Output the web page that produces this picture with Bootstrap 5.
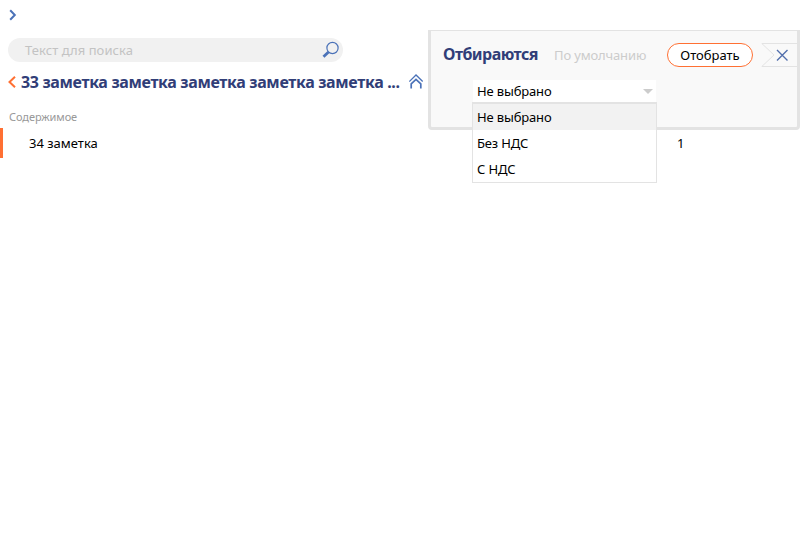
<!DOCTYPE html>
<html lang="ru">
<head>
<meta charset="utf-8">
<meta name="viewport" content="width=device-width, initial-scale=1">
<title>Заметки</title>
<link href="https://cdn.jsdelivr.net/npm/bootstrap@5.3.0/dist/css/bootstrap.min.css" rel="stylesheet">
<style>
body{font:13px/26px "Noto Sans",sans-serif;color:#000;background:#fff}
svg{display:block;flex:none}
.topbar{height:30px;padding:9px 0 0 9px}
.main-col{width:428px;padding-top:8px}
.side-col{width:372px}
.search{width:335px;height:24px;margin-left:8px;padding:0 3px 0 17px;background:#f1f1f1;color:#c3c3c3;letter-spacing:.06px}
.title-row{height:24px;margin-top:8px;padding-left:8px}
.heading{font-weight:700;color:#313e78}
.crumb{font-size:16px;line-height:24px;letter-spacing:-.34px;width:380px;margin-left:5px}
.content-label{font-size:11px;line-height:16px;margin:15px 0 3px 9px;color:#999;letter-spacing:-.08px}
.note-row{height:30px;line-height:30px;padding-left:26px;border-left:3px solid #ff7033}
.filter-panel{height:100px;background:#f9f9f9;border:solid #e3e3e3;border-width:1px 3px 3px;border-radius:0 0 4px 4px}
.panel-head{height:24px;margin-top:12px;padding-left:12px}
.panel-title{font-size:16px;line-height:24px;width:111px;padding-bottom:2px;letter-spacing:-.55px}
.reset{width:113px;color:#ccc;letter-spacing:-.15px}
.apply{width:86px;height:24px;border:1px solid #ff7033;background:#fff;font-size:13px;line-height:20px;padding:0;color:#000}
.select-wrap{width:185px;margin:13px 0 0 41px;letter-spacing:-.15px}
.select-box{height:22px;margin:0 1px;padding:0 3px 0 4px;background:#fff}
.options{top:22px;left:0;width:185px;border:1px solid #e3e3e3;border-top-width:2px;background:#fff;z-index:2}
.option{height:26px;padding-left:4px}
.option.current{background:#f2f2f2}
.amount{height:30px;line-height:30px;margin-top:-2px;padding-left:249px}
</style>
<script src="https://cdn.jsdelivr.net/npm/bootstrap@5.3.0/dist/js/bootstrap.bundle.min.js"></script>
</head>
<body class="min-vh-100">
<header class="topbar"><svg width="8" height="12" fill="none" stroke="#4b72b8" stroke-width="2"><path d="M1.2 1.2L5.8 6L1.2 10.8"/></svg></header>
<div class="d-flex">
<main class="main-col">
<div class="search rounded-pill d-flex align-items-center justify-content-between"><span>Текст для поиска</span>
<svg width="18" height="18" fill="none" stroke="#4b72b8"><circle cx="10.5" cy="7" r="5.6" stroke-width="1.2"/><path d="M6.5 11L1.5 15.8" stroke-width="2.8"/></svg></div>
<div class="title-row d-flex align-items-center">
<svg width="8" height="12" fill="none" stroke="#ff7033" stroke-width="2"><path d="M7 .8L1.5 6L7 11.2"/></svg>
<div class="heading crumb text-nowrap">33 заметка заметка заметка заметка заметка ...</div>
<svg width="16" height="16" class="ms-2" fill="none" stroke="#4b72b8"><path d="M.3 7.5L7 1L13.7 7.5" stroke-width="1.3"/><path d="M2.2 14.5V9.8L7 5.3L11.8 9.8V14.5" stroke-width="1.7"/></svg>
</div>
<div class="content-label"><span>Содержимое</span></div>
<div class="note-row"><span>34 заметка</span></div>
</main>
<aside class="side-col">
<section class="filter-panel">
<div class="panel-head d-flex align-items-center">
<div class="heading panel-title">Отбираются</div>
<div class="reset">По умолчанию</div>
<button type="button" class="btn apply rounded-pill">Отобрать</button>
<svg class="ms-auto" width="36" height="24" fill="none"><path d="M36 .5H.8L13 12L.8 23.5H36" stroke="#e3e3e3"/><path d="M16 7L26.5 17.5M26.5 7L16 17.5" stroke="#526fac" stroke-width="1.4"/></svg>
</div>
<div class="select-wrap position-relative">
<div class="select-box d-flex align-items-center justify-content-between"><span>Не выбрано</span><svg width="10" height="5" fill="#ccc"><path d="M0 0H10L5 5Z"/></svg></div>
<div class="options position-absolute"><div class="option current">Не выбрано</div><div class="option">Без НДС</div><div class="option">С НДС</div></div>
</div>
</section>
<div class="amount">1</div>
</aside>
</div>
</body>
</html>
